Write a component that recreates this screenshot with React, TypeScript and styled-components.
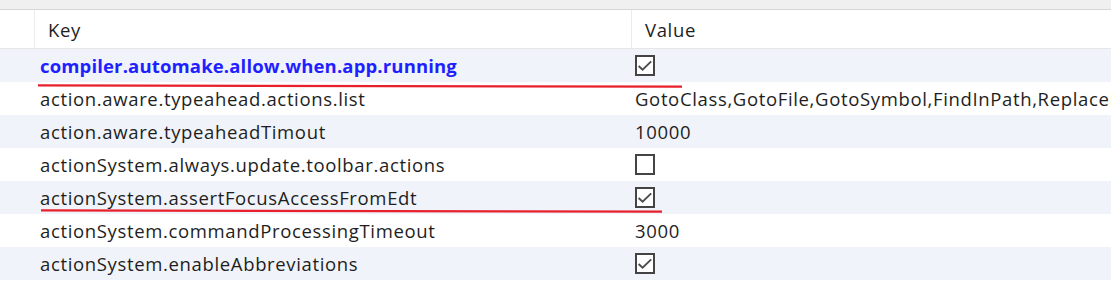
import * as React from "react"
import styled, { createGlobalStyle } from "styled-components"

const GlobalStyle = createGlobalStyle`
  html, body {
    margin: 0;
    padding: 0;
    background: #ffffff;
  }
  body {
    font-family: "Open Sans", "Noto Sans CJK SC", sans-serif;
  }
`

interface IEntry {
  name: string
  value: string | boolean
  modified?: boolean
  mark?: { from: number; to: number; drop: number }
}

const entries: IEntry[] = [
  { name: "compiler.automake.allow.when.app.running", value: true, modified: true, mark: { from: 38, to: 682, drop: 1 } },
  { name: "action.aware.typeahead.actions.list", value: "GotoClass,GotoFile,GotoSymbol,FindInPath,ReplaceInPath" },
  { name: "action.aware.typeaheadTimout", value: "10000" },
  { name: "actionSystem.always.update.toolbar.actions", value: false },
  { name: "actionSystem.assertFocusAccessFromEdt", value: true, mark: { from: 41, to: 662, drop: -6 } },
  { name: "actionSystem.commandProcessingTimeout", value: "3000" },
  { name: "actionSystem.enableAbbreviations", value: true },
]

const Page = styled.div`
  width: 1117px;
  height: 290px;
  overflow: hidden;
  background: #ffffff;
`

const TopStrip = styled.div`
  width: 1111px;
  height: 9px;
  background: #f0f0f0;
  border-bottom: 1px solid #d6d6d6;
`

const Table = styled.div`
  width: 1111px;
  display: flex;
  flex-direction: column;
`

const Row = styled.div<{ $alt?: boolean }>`
  position: relative;
  display: grid;
  grid-template-columns: 34px 597px 480px;
  height: 33px;
  align-items: center;
  background: ${(p) => (p.$alt ? "#f0f3f9" : "#ffffff")};
  font-size: 18.5px;
  letter-spacing: 0.65px;
  color: #1e1e1e;
  white-space: nowrap;
`

const HeaderRow = styled(Row)`
  height: 38px;
  border-bottom: 1px solid #e6e6e6;
`

const HeadCell = styled.div<{ $divider?: boolean }>`
  height: 100%;
  display: flex;
  align-items: center;
  padding-left: 13px;
  border-left: ${(p) => (p.$divider ? "1px solid #ececec" : "none")};
  color: #1e1e1e;
  overflow: hidden;
`

const KeyCell = styled.div<{ $modified?: boolean }>`
  padding-left: 6px;
  overflow: hidden;
  font-weight: ${(p) => (p.$modified ? 700 : 400)};
  letter-spacing: ${(p) => (p.$modified ? "0.15px" : "0.65px")};
  color: ${(p) => (p.$modified ? "#1f1fff" : "#1e1e1e")};
`

const ValueCell = styled.div`
  padding-left: 4px;
  overflow: hidden;
  display: flex;
  align-items: center;
`

const Box = styled.div`
  width: 20px;
  height: 21px;
  box-sizing: border-box;
  border: 2px solid #444444;
  border-bottom-width: 2.5px;
  background: #ffffff;
  display: flex;
  align-items: center;
  justify-content: center;
`

const Mark = styled.svg<{ $from: number; $drop: number }>`
  position: absolute;
  z-index: 2;
  left: ${(p) => p.$from}px;
  top: calc(100% + ${(p) => 1 + p.$drop}px);
  height: 4px;
  pointer-events: none;
`

const Check: React.FC<{ checked: boolean }> = ({ checked }) => (
  <Box>
    {checked && (
      <svg width="16" height="14" viewBox="0 0 16 14">
        <path d="M1.6 7L5.6 10.8L14.2 2.4" fill="none" stroke="#4d4d4d" strokeWidth="1.9" />
      </svg>
    )}
  </Box>
)

export default function App() {
  return (
    <Page>
      <GlobalStyle />
      <TopStrip />
      <Table>
        <HeaderRow>
          <div />
          <HeadCell $divider>Key</HeadCell>
          <HeadCell $divider>Value</HeadCell>
        </HeaderRow>
        {entries.map((e, i) => (
          <Row key={e.name} $alt={i % 2 === 0}>
            <div />
            <KeyCell $modified={e.modified}>{e.name}</KeyCell>
            <ValueCell>
              {typeof e.value === "boolean" ? <Check checked={e.value} /> : e.value}
            </ValueCell>
            {e.mark && (
              <Mark
                $from={e.mark.from}
                $drop={e.mark.drop}
                width={e.mark.to - e.mark.from}
                viewBox={`0 0 ${e.mark.to - e.mark.from} 4`}
              >
                <path
                  d={`M0 1.4 Q ${(e.mark.to - e.mark.from) / 2} 2.2 ${e.mark.to - e.mark.from} 2.6`}
                  fill="none"
                  stroke="#e8202b"
                  strokeWidth="2.2"
                  strokeLinecap="round"
                />
              </Mark>
            )}
          </Row>
        ))}
      </Table>
    </Page>
  )
}
